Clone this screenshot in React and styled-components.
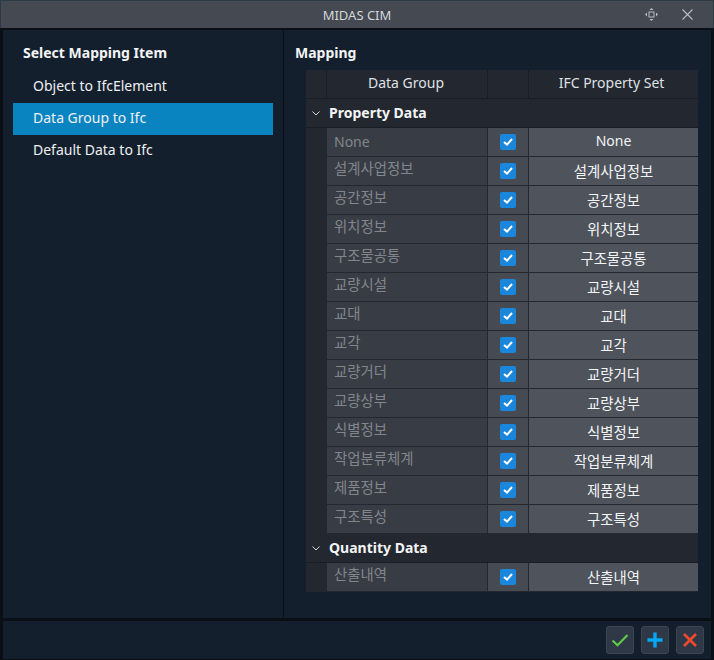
import React from "react";
import styled, { createGlobalStyle } from "styled-components";

const Global = createGlobalStyle`
  html, body { margin: 0; padding: 0; background: #0a0f15; }
  body { font-family: "Noto Sans", "Noto Sans CJK KR", sans-serif; }
`;

const propertyRows = [
  "None", "설계사업정보", "공간정보", "위치정보", "구조물공통", "교량시설", "교대",
  "교각", "교량거더", "교량상부", "식별정보", "작업분류체계", "제품정보", "구조특성",
];
const quantityRows = ["산출내역"];
const menuItems = ["Object to IfcElement", "Data Group to Ifc", "Default Data to Ifc"];

export default function App() {
  return (
    <>
      <Global />
      <Win>
        <TitleBar>
          <Title>MIDAS CIM</Title>
          <TitleIcons>
            <svg width="13" height="13" viewBox="0 0 13 13" fill="#b9bcc2">
              <rect x="4" y="4" width="5" height="5" fill="none" stroke="#b9bcc2" />
              <path d="M6.5 0L8.5 2H4.5zM6.5 13L4.5 11H8.5zM0 6.5L2 4.5V8.5zM13 6.5L11 8.5V4.5z" />
            </svg>
            <svg width="11" height="11" viewBox="0 0 11 11" fill="none" stroke="#b9bcc2" strokeWidth="1.1">
              <path d="M0.5 0.5l10 10M10.5 0.5l-10 10" />
            </svg>
          </TitleIcons>
        </TitleBar>
        <Body>
          <Side>
            <SideHeading>Select Mapping Item</SideHeading>
            {menuItems.map((m, i) => (
              <MenuItem key={m} $active={i === 1}>{m}</MenuItem>
            ))}
          </Side>
          <Main>
            <MainHeading>Mapping</MainHeading>
            <Table>
              <HeadRow>
                <HeadCell />
                <HeadCell>Data Group</HeadCell>
                <HeadCell />
                <HeadCell>IFC Property Set</HeadCell>
              </HeadRow>
              <Group title="Property Data" rows={propertyRows} />
              <Group title="Quantity Data" rows={quantityRows} />
            </Table>
          </Main>
        </Body>
        <Footer>
          <ActionButton>
            <svg width="18" height="13" viewBox="0 0 18 13" fill="none" stroke="#5fc94a" strokeWidth="2.2">
              <path d="M1.5 6.5l5 4.8L16.5 1" />
            </svg>
          </ActionButton>
          <ActionButton>
            <svg width="16" height="16" viewBox="0 0 16 16" fill="none" stroke="#05a8f5" strokeWidth="3.4">
              <path d="M8 0.5v15M0.5 8h15" />
            </svg>
          </ActionButton>
          <ActionButton>
            <svg width="14" height="14" viewBox="0 0 14 14" fill="none" stroke="#f04a2e" strokeWidth="2.6">
              <path d="M1 1l12 12M13 1L1 13" />
            </svg>
          </ActionButton>
        </Footer>
      </Win>
    </>
  );
}

function Group({ title, rows }) {
  return (
    <>
      <GroupRow>
        <Chevron width="8" height="5" viewBox="0 0 8 5" fill="none" stroke="#d5d7da">
          <path d="M0.5 0.5L4 4l3.5-3.5" />
        </Chevron>
        <GroupTitle>{title}</GroupTitle>
      </GroupRow>
      {rows.map((r) => {
        const latin = r === "None";
        return (
          <DataRow key={r}>
            <Gutter />
            <NameCell $latin={latin}>{r}</NameCell>
            <CheckCell>
              <CheckBox>
                <svg width="10" height="8" viewBox="0 0 10 8" fill="none" stroke="#fff" strokeWidth="2">
                  <path d="M1 4l3 2.6L9 1" />
                </svg>
              </CheckBox>
            </CheckCell>
            <ValueCell $latin={latin}>{r}</ValueCell>
          </DataRow>
        );
      })}
    </>
  );
}

const Win = styled.div`
  width: 714px;
  height: 660px;
  display: flex;
  flex-direction: column;
  background: #0a0f15;
  overflow: hidden;
`;

const TitleBar = styled.div`
  height: 28px;
  box-sizing: border-box;
  flex: none;
  position: relative;
  display: flex;
  align-items: center;
  justify-content: center;
  background: #454951;
  border-top: 1px solid #2c3a45;
  border-left: 1px solid #2c3a45;
  border-right: 1px solid #2c3a45;
`;

const Title = styled.div`
  font-size: 13px;
  color: #d4d6d9;
`;

const TitleIcons = styled.div`
  position: absolute;
  right: 20px;
  top: 7px;
  display: flex;
  align-items: center;
  gap: 24px;
`;

const Body = styled.div`
  height: 588px;
  margin: 2px 3px 0;
  flex: none;
  display: flex;
  background: #141f2d;
`;

const Side = styled.div`
  width: 281px;
  flex: none;
  box-sizing: border-box;
  padding: 0 10px;
  border-right: 1px solid #0a0f15;
`;

const SideHeading = styled.div`
  font-size: 14px;
  font-weight: 700;
  color: #f3f4f5;
  height: 41px;
  line-height: 46px;
  padding-left: 10px;
`;

const MenuItem = styled.div`
  width: 260px;
  height: 32px;
  line-height: 30px;
  padding-left: 20px;
  box-sizing: border-box;
  font-size: 14px;
  color: #eef0f2;
  background: ${(p) => (p.$active ? "#0a84c1" : "transparent")};
`;

const Main = styled.div`
  flex: 1;
  padding-left: 11px;
`;

const MainHeading = styled.div`
  font-size: 14px;
  font-weight: 700;
  color: #f3f4f5;
  height: 40px;
  line-height: 46px;
`;

const Table = styled.div`
  margin-left: 11px;
  width: 392px;
`;

const HeadRow = styled.div`
  display: grid;
  grid-template-columns: 21px 161px 41px 169px;
  height: 29px;
  background: #23272f;
  border-bottom: 1px solid #1a1d24;
  box-sizing: border-box;
`;

const HeadCell = styled.div`
  font-size: 14px;
  color: #dfe1e4;
  display: flex;
  align-items: center;
  justify-content: center;
  box-sizing: border-box;
  border-right: 1px solid #1a1d24;
  padding: 0 2px 3px 0;
  &:last-child { border-right: none; padding-right: 4px; }
`;

const GroupRow = styled.div`
  height: 29px;
  box-sizing: border-box;
  display: flex;
  align-items: center;
  background: #23272f;
  border-bottom: 1px solid #1a1d24;
`;

const Chevron = styled.svg`
  margin-left: 6px;
`;

const GroupTitle = styled.span`
  margin-left: 9px;
  font-size: 14px;
  font-weight: 700;
  color: #f3f4f5;
  padding-bottom: 2px;
`;

const DataRow = styled.div`
  display: grid;
  grid-template-columns: 21px 161px 41px 169px;
  height: 29px;
`;

const Gutter = styled.div`
  background: #23272f;
`;

const NameCell = styled.div`
  background: #383d45;
  color: #82868c;
  font-size: ${(p) => (p.$latin ? "14px" : "14.4px")};
  padding-left: 7px;
  line-height: ${(p) => (p.$latin ? "28px" : "23px")};
  box-sizing: border-box;
  border-right: 1px solid #23272f;
  border-bottom: 1px solid #23272f;
`;

const CheckCell = styled.div`
  background: #454a53;
  display: flex;
  align-items: center;
  justify-content: center;
  box-sizing: border-box;
  border-right: 1px solid #23272f;
  border-bottom: 1px solid #23272f;
`;

const CheckBox = styled.div`
  width: 16px;
  height: 16px;
  border-radius: 2px;
  background: #1a86dc;
  display: flex;
  align-items: center;
  justify-content: center;
`;

const ValueCell = styled.div`
  background: #4e535c;
  color: #f3f4f5;
  font-size: ${(p) => (p.$latin ? "14px" : "14.4px")};
  display: flex;
  align-items: center;
  justify-content: center;
  box-sizing: border-box;
  border-bottom: 1px solid #23272f;
  padding-bottom: ${(p) => (p.$latin ? "3px" : "2px")};
`;

const Footer = styled.div`
  flex: 1;
  margin: 3px 3px 1px;
  background: #141f2d;
  display: flex;
  align-items: center;
  justify-content: flex-end;
  gap: 7px;
  padding-right: 7px;
`;

const ActionButton = styled.div`
  width: 28px;
  height: 28px;
  box-sizing: border-box;
  border-radius: 3px;
  background: #2e3847;
  border: 1px solid #3a4453;
  display: flex;
  align-items: center;
  justify-content: center;
`;
